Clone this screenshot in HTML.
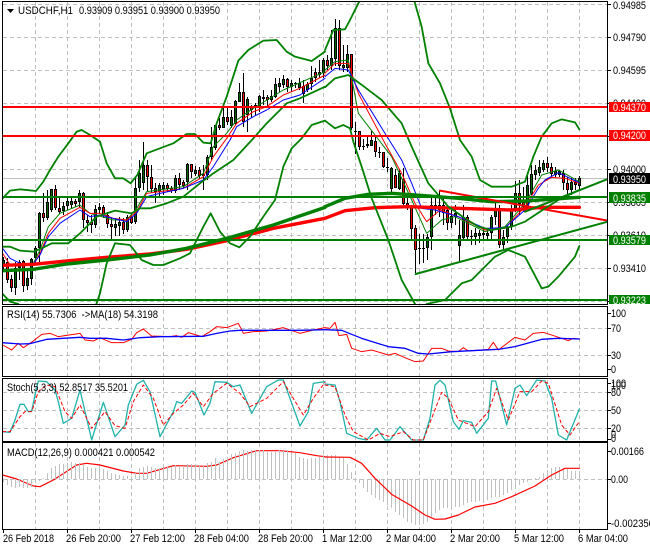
<!DOCTYPE html>
<html><head><meta charset="utf-8"><style>
html,body{margin:0;padding:0;background:#fff;width:650px;height:550px;overflow:hidden}
svg{display:block}
text{font-family:"Liberation Sans",sans-serif;font-size:11px;fill:#000}
.w{fill:#fff}
.l{fill:none;stroke-linejoin:round;stroke-linecap:round}
.l polyline{fill:none;vector-effect:non-scaling-stroke}
</style></head><body>
<svg width="650" height="550" viewBox="0 0 650 550" xmlns="http://www.w3.org/2000/svg">
<defs>
<clipPath id="c1"><rect x="3" y="2" width="605" height="302"/></clipPath>
</defs>
<rect width="650" height="550" fill="#fff"/>
<!-- grid -->
<g stroke="#c0c0c0" stroke-width="1" stroke-dasharray="4 3" fill="none" shape-rendering="crispEdges">
<path d="M35.5 2V529M67.5 2V529M99.5 2V529M131.5 2V529M163.5 2V529M195.5 2V529M227.5 2V529M259.5 2V529M291.5 2V529M323.5 2V529M355.5 2V529M387.5 2V529M419.5 2V529M451.5 2V529M483.5 2V529M515.5 2V529M547.5 2V529M579.5 2V529"/>
<path d="M3 4.5H608M3 37.5H608M3 70.5H608M3 103.5H608M3 136.5H608M3 169.5H608M3 202.5H608M3 235.5H608M3 268.5H608M3 301.5H608"/>
<path d="M3 328.5H608M3 355.5H608M3 392.5H608M3 410.5H608M3 428.5H608M3 479.5H608"/>
</g>
<path d="M3 178.5H608" stroke="#c0c0c0" shape-rendering="crispEdges"/>
<g clip-path="url(#c1)" shape-rendering="crispEdges" fill="none">
<!-- wicks -->
<path stroke="#000" d="M3.5 257V272M7.5 258V283M11.5 275V292M15.5 262V295M19.5 260V280M23.5 260V292M27.5 270V290M31.5 258V285M35.5 246V265M39.5 212V262M43.5 193V222M47.5 190V220M51.5 189V212M55.5 185V210M59.5 198V214M63.5 202V215M67.5 197V210M71.5 198V208M75.5 199V207M79.5 190V208M83.5 192V228M87.5 215V232M91.5 215V233M95.5 205V228M99.5 203V214M103.5 205V218M107.5 212V228M111.5 218V240M115.5 218V236M119.5 217V236M123.5 218V234M127.5 215V232M131.5 214V224M135.5 178V224M139.5 160V192M143.5 142V190M147.5 160V192M151.5 165V193M155.5 183V203M159.5 183V198M163.5 182V195M167.5 183V192M171.5 186V193M175.5 175V193M179.5 173V190M183.5 180V188M187.5 163V190M191.5 164V178M195.5 166V176M199.5 167V179M203.5 165V190M207.5 155V180M211.5 127V160M215.5 125V150M219.5 118V130M223.5 107V128M227.5 107V125M231.5 110V128M235.5 100V125M239.5 83V102M243.5 73V127M247.5 97V132M251.5 105V118M255.5 103V115M259.5 95V112M263.5 90V105M267.5 95V108M271.5 90V102M275.5 78V98M279.5 78V92M283.5 75V88M287.5 78V92M291.5 80V92M295.5 82V88M299.5 78V90M303.5 80V103M307.5 82V92M311.5 66V90M315.5 68V82M319.5 60V78M323.5 58V78M327.5 55V70M331.5 30V70M335.5 19V66M339.5 20V70M343.5 45V72M347.5 45V72M351.5 54V130M355.5 122V154M359.5 131V150M363.5 139V150M367.5 137V148M371.5 131V146M375.5 137V157M379.5 147V158M383.5 152V168M387.5 158V172M391.5 167V193M395.5 169V188M399.5 170V190M403.5 168V205M407.5 196V210M411.5 205V240M415.5 225V273M419.5 234V264M423.5 234V263M427.5 234V260M431.5 195V250M435.5 195V215M439.5 190V217M443.5 197V225M447.5 205V230M451.5 210V228M455.5 205V225M459.5 220V262M463.5 205V240M467.5 215V240M471.5 230V245M475.5 228V245M479.5 230V243M483.5 228V240M487.5 228V240M491.5 215V240M495.5 200V225M499.5 205V248M503.5 230V250M507.5 225V243M511.5 205V230M515.5 181V212M519.5 180V215M523.5 187V212M527.5 172V210M531.5 165V195M535.5 165V180M539.5 160V176M543.5 160V172M547.5 157V172M551.5 163V178M555.5 167V177M559.5 170V177M563.5 170V190M567.5 177V195M571.5 178V195M575.5 178V190M579.5 176V190"/>
<!-- body outlines -->
<path stroke="#000" stroke-width="3" d="M3.5 260V266M7.5 262V280M11.5 279V288M15.5 268V288M19.5 262V268M23.5 261V286M27.5 278V286M31.5 259V279M35.5 248V258M39.5 213V248M43.5 213V218M47.5 202V218M51.5 189V210M55.5 189V208M59.5 208V212M63.5 206V211M67.5 201V206M71.5 201V205M75.5 201V204M79.5 193V202M83.5 193V220M87.5 220V223M91.5 222V225M95.5 209V225M99.5 207V210M103.5 207V215M107.5 215V224M111.5 224V227M115.5 224V228M119.5 222V226M123.5 222V230M127.5 217V230M131.5 217V223M135.5 188V222M139.5 173V188M143.5 165V183M147.5 165V177M151.5 177V189M155.5 188V192M159.5 185V192M163.5 185V189M167.5 185V189M171.5 188V191M175.5 178V191M179.5 178V185M183.5 182V186M187.5 164V182M191.5 164V172M195.5 170V174M199.5 170V176M203.5 174V176M207.5 157V175M211.5 147V157M215.5 125V148M219.5 125V128M223.5 117V128M227.5 117V122M231.5 117V126M235.5 101V124M239.5 92V102M243.5 92V122M247.5 99V115M251.5 107V110M255.5 105V108M259.5 96V107M263.5 97V99M267.5 97V100M271.5 96V100M275.5 84V97M279.5 83V87M283.5 79V85M287.5 79V87M291.5 83V87M295.5 83V84M299.5 83V88M303.5 86V94M307.5 84V90M311.5 78V84M315.5 72V78M319.5 72V75M323.5 60V73M327.5 60V66M331.5 58V66M335.5 28V59M339.5 28V66M343.5 65V68M347.5 54V68M351.5 54V128M355.5 131V132M359.5 131V147M363.5 146V147M367.5 144V146M371.5 140V146M375.5 141V152M379.5 152V153M383.5 152V167M387.5 167V168M391.5 168V189M395.5 175V188M399.5 173V189M403.5 179V204M407.5 203V208M411.5 207V229M415.5 228V250M419.5 248V249M423.5 248V249M427.5 237V248M431.5 205V237M435.5 205V209M439.5 205V210M443.5 205V213M447.5 210V223M451.5 216V223M455.5 213V217M459.5 235V246M463.5 217V238M467.5 217V237M471.5 236V237M475.5 233V237M479.5 233V236M483.5 233V235M487.5 233V236M491.5 217V233M495.5 210V217M499.5 210V245M503.5 237V245M507.5 227V237M511.5 210V227M515.5 193V209M519.5 193V204M523.5 202V207M527.5 185V207M531.5 174V194M535.5 170V175M539.5 167V173M543.5 163V170M547.5 163V168M551.5 167V174M555.5 171V175M559.5 171V175M563.5 173V183M567.5 183V190M571.5 182V190M575.5 182V185M579.5 178V186"/>
<!-- bearish fill -->
<path stroke="#f00" d="M7.5 263V279M11.5 280V287M23.5 262V285M43.5 214V217M55.5 190V207M59.5 209V211M75.5 202V203M83.5 194V219M87.5 221V222M91.5 223V224M103.5 208V214M107.5 216V223M111.5 225V226M123.5 223V229M131.5 218V222M147.5 166V176M151.5 178V188M155.5 189V191M167.5 186V188M171.5 189V190M179.5 179V184M183.5 183V185M191.5 165V171M199.5 171V175M219.5 126V127M227.5 118V121M243.5 93V121M251.5 108V109M267.5 98V99M287.5 80V86M303.5 87V93M315.5 73V77M327.5 61V65M339.5 29V65M351.5 55V127M359.5 132V146M375.5 142V151M383.5 153V166M395.5 176V187M403.5 180V203M407.5 204V207M411.5 208V228M415.5 229V249M439.5 206V209M443.5 206V212M447.5 211V222M467.5 218V236M499.5 211V244M519.5 194V203M523.5 203V206M547.5 164V167M551.5 168V173M563.5 174V182M567.5 184V189M575.5 183V184"/>
<!-- bullish fill -->
<path stroke="#006400" d="M3.5 261V265M15.5 269V287M19.5 263V267M27.5 279V285M31.5 260V278M35.5 249V257M39.5 214V247M47.5 203V217M51.5 190V209M63.5 207V210M67.5 202V205M71.5 202V204M79.5 194V201M95.5 210V224M99.5 208V209M115.5 225V227M119.5 223V225M127.5 218V229M135.5 189V221M139.5 174V187M143.5 166V182M159.5 186V191M163.5 186V188M175.5 179V190M187.5 165V181M195.5 171V173M207.5 158V174M211.5 148V156M215.5 126V147M223.5 118V127M231.5 118V125M235.5 102V123M239.5 93V101M247.5 100V114M255.5 106V107M259.5 97V106M271.5 97V99M275.5 85V96M279.5 84V86M283.5 80V84M291.5 84V86M299.5 84V87M307.5 85V89M311.5 79V83M319.5 73V74M323.5 61V72M331.5 59V65M335.5 29V58M343.5 66V67M347.5 55V67M367.5 145V145M371.5 141V145M391.5 169V188M399.5 174V188M427.5 238V247M431.5 206V236M435.5 206V208M451.5 217V222M455.5 214V216M459.5 236V245M463.5 218V237M475.5 234V236M479.5 234V235M487.5 234V235M491.5 218V232M495.5 211V216M503.5 238V244M507.5 228V236M511.5 211V226M515.5 194V208M527.5 186V206M531.5 175V193M535.5 171V174M539.5 168V172M543.5 164V169M555.5 172V174M559.5 172V174M571.5 183V189M579.5 179V185"/>
</g>
<g clip-path="url(#c1)">
<!-- zoom-1 coords -->
<g class="l" transform="scale(.33333)">
<polyline stroke="#008000" stroke-width="1" points="100,790 120,750 145,680 180,640 240,615 270,640 340,660 380,660 410,625 440,575 550,560 610,520 640,440 680,400 710,360 760,325 850,270 975,215"/>
<polyline stroke="#f00" stroke-width="1" points="8,760 30,795 100,795 120,760 145,700 180,655 240,622 270,640 300,640 340,655 380,660 410,635 440,580 480,575 550,565 610,530 640,470 680,415 710,370 760,335 800,320 850,285 900,265 975,225"/>
<polyline stroke="#00f" stroke-width="1" points="8,745 30,775 60,790 100,792 120,765 145,710 180,670 240,630 270,650 300,645 340,655 380,665 410,640 440,590 480,580 550,565 610,540 640,500 690,420 710,380 760,350 800,330 850,300 900,285 975,235"/>
<polyline stroke="#f00" stroke-width="3.4" points="8,796 100,793 200,783 320,772 450,762 560,748 680,722 820,685 975,655"/>
<polyline stroke="#008000" stroke-width="3.4" points="8,812 100,808 200,792 320,780 450,765 560,745 680,715 820,675 975,622"/>
<polyline stroke="#008000" stroke-width="1.8" points="8,595 30,572 60,568 108,573 130,545 150,510 175,470 205,430 230,395 245,390 270,405 300,425 320,490 345,535 370,535 392,550 412,525 440,460 480,445 520,430 560,402 585,402 610,428 632,430 650,370 680,290 715,182 745,150 790,122 830,120 860,155 885,170 935,183 975,155"/>
<polyline stroke="#008000" stroke-width="1.8" points="8,740 30,740 60,752 100,755 125,745 155,730 205,730 240,700 290,650 345,632 395,640 420,625 450,625 500,610 550,590 600,550 640,520 700,480 760,415 800,370 860,310 900,295 975,260"/>
<polyline stroke="#008000" stroke-width="1.8" points="8,882 30,905 55,912 60,930 280,930 290,910 300,880 320,790 345,730 390,735 425,780 460,795 490,795 540,775 570,760 590,720 610,680 632,640 660,695 690,730 718,742 750,710 790,650 825,600 850,500 875,445 905,415 935,375 975,362"/>
</g>
<!-- zoom-2 coords -->
<g class="l" transform="translate(325 0) scale(.33333)">
<polyline stroke="#008000" stroke-width="1" points="0,210 30,185 70,180 100,340 200,470 260,600 305,700 350,660 390,650 480,695 540,680 600,610 650,525 700,510 763,545"/>
<polyline stroke="#f00" stroke-width="1" points="0,220 30,190 70,190 100,280 180,430 230,520 270,610 305,665 345,630 400,650 480,690 540,685 600,620 640,555 680,532 720,535 763,550"/>
<polyline stroke="#00f" stroke-width="1" points="0,230 30,205 70,210 100,270 180,400 230,480 260,550 290,625 330,630 400,650 480,685 540,683 600,630 640,565 660,540 700,518 763,548"/>
<polyline stroke="#f00" stroke-width="3.4" points="0,655 60,632 150,623 250,620 400,625 560,630 650,622 763,622"/>
<polyline stroke="#008000" stroke-width="3.4" points="0,620 60,595 130,583 200,580 300,587 400,595 500,605 600,603 763,592"/>
<polyline stroke="#f00" stroke-width="2" points="345,572 848,662"/>
<polyline stroke="#008000" stroke-width="2" points="272,822 848,665"/>
<polyline stroke="#008000" stroke-width="2" points="600,635 848,537"/>
<polyline stroke="#008000" stroke-width="1.8" points="0,150 25,90 60,88 75,60 100,10 110,-10"/>
<polyline stroke="#008000" stroke-width="1.8" points="265,-10 270,10 290,80 310,190 345,250 375,325 405,420 440,470 465,540 500,560 560,560 600,545 625,470 650,410 680,370 710,358 750,367 763,388"/>
<polyline stroke="#008000" stroke-width="1.8" points="0,262 30,235 70,225 120,262 170,300 230,370 260,440 310,550 370,620 420,655 460,680 500,690 560,680 600,665 660,625 700,600 763,570"/>
<polyline stroke="#008000" stroke-width="1.8" points="0,362 30,385 55,375 75,385 85,425 110,500 140,595 190,720 230,840 270,912"/>
<polyline stroke="#008000" stroke-width="1.8" points="305,912 360,900 410,850 440,840 470,810 510,770 550,750 600,770 650,865 670,860 700,830 750,770 763,738"/>
</g>
<!-- levels -->
<g shape-rendering="crispEdges">
<rect x="3" y="106" width="605" height="2" fill="#f00"/>
<rect x="3" y="135" width="605" height="2" fill="#f00"/>
<rect x="3" y="196" width="605" height="2" fill="#008000"/>
<rect x="3" y="239" width="605" height="2" fill="#008000"/>
<rect x="3" y="299" width="605" height="2" fill="#008000"/>
</g>
</g>
<!-- RSI -->
<g class="l" transform="translate(0 305) scale(.33333)">
<polyline stroke="#f00" stroke-width="1" points="8,120 35,135 55,115 70,128 100,108 125,88 150,85 175,95 240,85 255,105 280,108 300,98 335,113 370,113 395,103 410,83 430,72 455,93 510,95 530,92 545,97 565,83 605,95 630,80 650,65 680,68 715,55 730,85 760,80 800,78 850,68 900,85 940,75 975,68"/>
<polyline stroke="#00f" stroke-width="1.3" points="8,113 60,117 90,116 140,103 190,100 240,97 270,100 320,100 370,105 420,98 480,95 610,94 650,85 690,78 720,76 900,76 975,74"/>
<polyline stroke="#20b2aa" stroke-width="1.3" points="8,380 30,382 45,345 60,298 72,298 85,320 95,318 105,270 115,228 140,230 165,255 175,290 190,355 215,340 240,255 275,405 310,292 345,395 375,360 385,300 410,238 430,226 450,260 480,395 520,320 530,290 545,295 575,258 585,262 612,330 630,295 645,230 680,232 700,245 720,240 755,325 800,245 835,225 850,225 900,363 925,320 940,235 975,230"/>
<polyline stroke="#f00" stroke-width="1" stroke-dasharray="3 3" points="8,380 30,380 60,335 75,320 95,320 115,260 140,240 165,245 195,320 215,340 240,300 275,370 315,320 345,362 375,370 400,290 430,240 460,280 490,360 520,325 550,300 580,265 610,305 640,265 680,235 720,265 750,305 800,280 850,230 910,330 940,280 975,232"/>
<polyline stroke="#f00" stroke-width="1.2" points="8,510 50,522 100,543 120,545 160,525 230,480 260,475 300,480 370,498 410,505 440,505 520,482 620,484 650,480 700,458 770,437 840,437 900,443 950,452 975,455"/>
</g>
<g class="l" transform="translate(325 305) scale(.33333)">
<polyline stroke="#f00" stroke-width="1" points="0,68 15,70 30,52 42,92 65,88 80,130 110,140 140,135 190,150 210,145 240,158 270,170 295,168 320,130 350,130 370,138 400,140 415,128 430,138 490,133 505,112 520,135 570,97 600,105 625,85 655,82 710,100 730,107 745,100 763,102"/>
<polyline stroke="#00f" stroke-width="1.3" points="0,74 50,76 110,100 190,125 240,130 280,145 310,147 380,140 520,133 570,125 650,103 700,100 763,102"/>
<polyline stroke="#20b2aa" stroke-width="1.3" points="0,237 30,240 45,290 65,385 100,400 125,405 155,370 180,405 195,405 225,365 260,405 295,405 315,340 330,240 345,226 360,240 385,350 402,373 415,347 440,352 455,385 490,340 500,228 512,228 545,360 570,250 585,240 605,272 635,225 660,228 680,280 700,390 725,405 763,312"/>
<polyline stroke="#f00" stroke-width="1" stroke-dasharray="3 3" points="0,240 30,245 60,330 85,380 130,405 165,385 195,395 235,380 265,405 295,405 320,340 350,262 370,280 400,345 450,365 490,320 515,250 550,345 585,260 620,260 650,228 670,235 710,360 735,390 763,350"/>
</g>
<!-- MACD histogram -->
<path stroke="#c0c0c0" fill="none" shape-rendering="crispEdges" d="M3.5 479V482M7.5 479V485M11.5 479V487M15.5 479V488M19.5 479V487M23.5 479V488M27.5 479V488M31.5 479V487M35.5 479V483M39.5 479V481M43.5 479V478M47.5 479V473M51.5 479V468M55.5 479V466M59.5 479V464M63.5 479V464M67.5 479V463M71.5 479V462M75.5 479V463M79.5 479V463M83.5 479V465M87.5 479V467M91.5 479V468M95.5 479V468M99.5 479V468M103.5 479V469M107.5 479V471M111.5 479V473M115.5 479V474M119.5 479V475M123.5 479V476M127.5 479V476M131.5 479V476M135.5 479V473M139.5 479V468M143.5 479V467M147.5 479V466M151.5 479V467M155.5 479V468M159.5 479V468M163.5 479V468M167.5 479V467M171.5 479V467M175.5 479V465M179.5 479V466M183.5 479V466M187.5 479V464M191.5 479V464M195.5 479V465M199.5 479V466M203.5 479V466M207.5 479V463M211.5 479V462M215.5 479V458M219.5 479V462M223.5 479V459M227.5 479V457M231.5 479V454M235.5 479V453M239.5 479V451M243.5 479V450M247.5 479V451M251.5 479V450M255.5 479V450M259.5 479V450M263.5 479V450M267.5 479V452M271.5 479V452M275.5 479V452M279.5 479V450M283.5 479V451M287.5 479V450M291.5 479V453M295.5 479V453M299.5 479V457M303.5 479V458M307.5 479V459M311.5 479V458M315.5 479V458M319.5 479V457M323.5 479V455M327.5 479V455M331.5 479V455M335.5 479V455M339.5 479V457M343.5 479V458M347.5 479V464M351.5 479V472M355.5 479V479M359.5 479V483M363.5 479V488M367.5 479V492M371.5 479V495M375.5 479V498M379.5 479V500M383.5 479V502M387.5 479V505M391.5 479V508M395.5 479V512M399.5 479V515M403.5 479V518M407.5 479V522M411.5 479V523M415.5 479V525M419.5 479V525M423.5 479V524M427.5 479V522M431.5 479V517M435.5 479V513M439.5 479V510M443.5 479V508M447.5 479V508M451.5 479V508M455.5 479V507M459.5 479V507M463.5 479V505M467.5 479V503M471.5 479V502M475.5 479V502M479.5 479V501M483.5 479V500M487.5 479V500M491.5 479V498M495.5 479V497M499.5 479V497M503.5 479V495M507.5 479V493M511.5 479V490M515.5 479V487M519.5 479V485M523.5 479V483M527.5 479V482M531.5 479V480M535.5 479V478M539.5 479V477M543.5 479V473M547.5 479V470M551.5 479V468M555.5 479V467M559.5 479V467M563.5 479V468M567.5 479V469M571.5 479V471M575.5 479V471M579.5 479V471"/>
<g class="l" transform="translate(325 305) scale(.33333)">
<polyline stroke="#f00" stroke-width="1.2" points="0,456 75,457 110,475 150,520 200,568 260,603 300,630 330,643 360,642 400,630 450,606 510,595 560,575 630,543 680,510 720,490 763,490"/>
</g>
<!-- frames -->
<g fill="none" stroke="#000" shape-rendering="crispEdges">
<rect x="2.5" y="1.5" width="605" height="303"/>
<rect x="2.5" y="306.5" width="605" height="70"/>
<rect x="2.5" y="378.5" width="605" height="63"/>
<rect x="2.5" y="442.5" width="605" height="87"/>
<path d="M608 4.5h3M608 37.5h3M608 70.5h3M608 103.5h3M608 136.5h3M608 169.5h3M608 202.5h3M608 235.5h3M608 268.5h3M608 301.5h3M608 313.5h3M608 328.5h3M608 355.5h3M608 369.5h3M608 383.5h3M608 392.5h3M608 410.5h3M608 428.5h3M608 439.5h3M608 451.5h3M608 479.5h3M608 523.5h3M3.5 530v3M67.5 530v3M131.5 530v3M195.5 530v3M259.5 530v3M323.5 530v3M387.5 530v3M451.5 530v3M515.5 530v3M579.5 530v3"/>
</g>
<!-- titles -->
<path d="M7 9h7l-3.500 4z" fill="#000"/>
<text x="18" y="14" textLength="55" lengthAdjust="spacingAndGlyphs">USDCHF,H1</text>
<text x="79" y="14" textLength="141" lengthAdjust="spacingAndGlyphs">0.93909 0.93951 0.93900 0.93950</text>
<text x="7" y="318" textLength="151" lengthAdjust="spacingAndGlyphs" xml:space="preserve">RSI(14) 55.7306  -&gt;MA(18) 54.3198</text>
<text x="7" y="391" textLength="121" lengthAdjust="spacingAndGlyphs">Stoch(5,3,3) 52.8517 35.5201</text>
<text x="7" y="456" textLength="148" lengthAdjust="spacingAndGlyphs">MACD(12,26,9) 0.000421 0.000542</text>
<!-- price axis -->
<g>
<text x="613" y="9" textLength="33" lengthAdjust="spacingAndGlyphs">0.94985</text>
<text x="613" y="41" textLength="33" lengthAdjust="spacingAndGlyphs">0.94790</text>
<text x="613" y="74" textLength="33" lengthAdjust="spacingAndGlyphs">0.94595</text>
<text x="613" y="107" textLength="33" lengthAdjust="spacingAndGlyphs">0.94400</text>
<text x="613" y="173" textLength="33" lengthAdjust="spacingAndGlyphs">0.94000</text>
<text x="613" y="206" textLength="33" lengthAdjust="spacingAndGlyphs">0.93805</text>
<text x="613" y="239" textLength="33" lengthAdjust="spacingAndGlyphs">0.93610</text>
<text x="613" y="272" textLength="33" lengthAdjust="spacingAndGlyphs">0.93410</text>
</g>
<g shape-rendering="crispEdges">
<rect x="609" y="102" width="41" height="10" fill="#f00"/>
<rect x="609" y="130" width="41" height="11" fill="#f00"/>
<rect x="609" y="173" width="41" height="11" fill="#000"/>
<rect x="609" y="192" width="41" height="11" fill="#008000"/>
<rect x="609" y="235" width="41" height="10" fill="#008000"/>
<rect x="609" y="295" width="41" height="9" fill="#008000"/>
</g>
<text class="w" x="613" y="111" textLength="33" lengthAdjust="spacingAndGlyphs">0.94370</text>
<text class="w" x="613" y="139" textLength="33" lengthAdjust="spacingAndGlyphs">0.94200</text>
<text class="w" x="613" y="183" textLength="33" lengthAdjust="spacingAndGlyphs">0.93950</text>
<text class="w" x="613" y="202" textLength="33" lengthAdjust="spacingAndGlyphs">0.93835</text>
<text class="w" x="613" y="244" textLength="33" lengthAdjust="spacingAndGlyphs">0.93579</text>
<text class="w" x="613" y="304" textLength="33" lengthAdjust="spacingAndGlyphs">0.93223</text>
<!-- sub axes -->
<text x="611" y="317" textLength="15" lengthAdjust="spacingAndGlyphs">100</text>
<text x="611" y="332" textLength="10" lengthAdjust="spacingAndGlyphs">70</text>
<text x="611" y="359" textLength="10" lengthAdjust="spacingAndGlyphs">30</text>
<text x="611" y="373" textLength="5" lengthAdjust="spacingAndGlyphs">0</text>
<text x="611" y="387" textLength="15" lengthAdjust="spacingAndGlyphs">100</text>
<text x="611" y="389" textLength="15" lengthAdjust="spacingAndGlyphs">100</text>
<text x="611" y="396" textLength="10" lengthAdjust="spacingAndGlyphs">80</text>
<text x="611" y="414" textLength="10" lengthAdjust="spacingAndGlyphs">50</text>
<text x="611" y="432" textLength="10" lengthAdjust="spacingAndGlyphs">20</text>
<text x="611" y="438" textLength="5" lengthAdjust="spacingAndGlyphs">0</text>
<text x="611" y="442" textLength="5" lengthAdjust="spacingAndGlyphs">0</text>
<text x="611" y="455" textLength="33" lengthAdjust="spacingAndGlyphs">0.00166</text>
<text x="611" y="483" textLength="17" lengthAdjust="spacingAndGlyphs">0.00</text>
<text x="611" y="527" textLength="43" lengthAdjust="spacingAndGlyphs">-0.002356</text>
<!-- time axis -->
<text x="3" y="542" textLength="51" lengthAdjust="spacingAndGlyphs">26 Feb 2018</text>
<text x="66" y="542" textLength="55" lengthAdjust="spacingAndGlyphs">26 Feb 20:00</text>
<text x="130" y="542" textLength="55" lengthAdjust="spacingAndGlyphs">27 Feb 12:00</text>
<text x="194" y="542" textLength="55" lengthAdjust="spacingAndGlyphs">28 Feb 04:00</text>
<text x="258" y="542" textLength="55" lengthAdjust="spacingAndGlyphs">28 Feb 20:00</text>
<text x="322" y="542" textLength="50" lengthAdjust="spacingAndGlyphs">1 Mar 12:00</text>
<text x="386" y="542" textLength="50" lengthAdjust="spacingAndGlyphs">2 Mar 04:00</text>
<text x="450" y="542" textLength="50" lengthAdjust="spacingAndGlyphs">2 Mar 20:00</text>
<text x="514" y="542" textLength="50" lengthAdjust="spacingAndGlyphs">5 Mar 12:00</text>
<text x="578" y="542" textLength="50" lengthAdjust="spacingAndGlyphs">6 Mar 04:00</text>
</svg>
</body></html>
